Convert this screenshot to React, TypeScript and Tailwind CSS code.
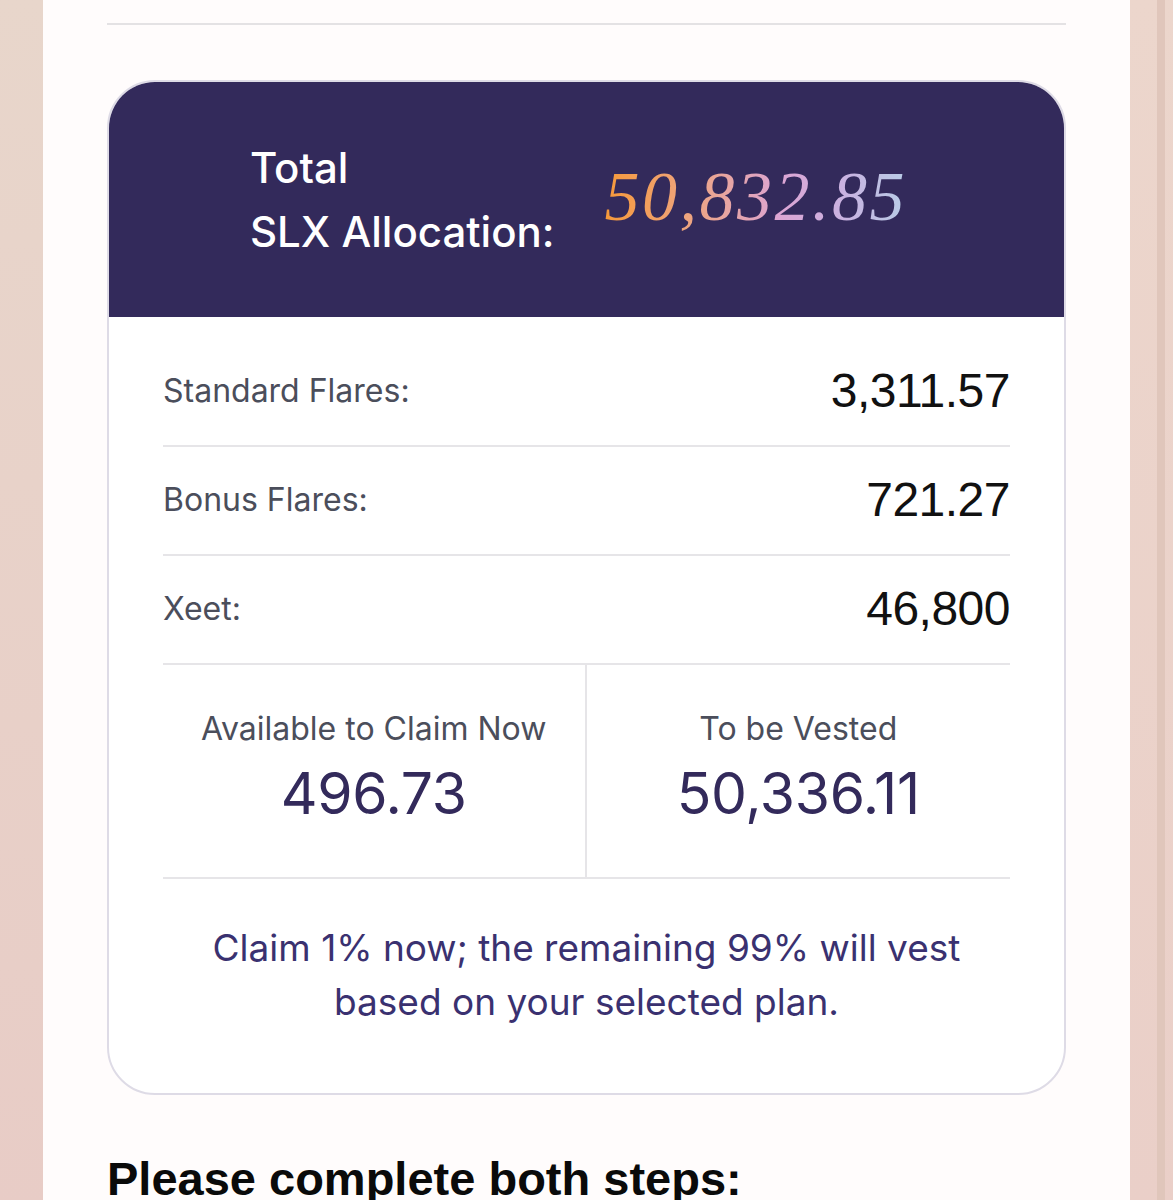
const rows = [
  { label: "Standard Flares:", value: "3,311.57" },
  { label: "Bonus Flares:", value: "721.27" },
  { label: "Xeet:", value: "46,800" },
];

function StatCell({ label, value, divider }: { label: string; value: string; divider?: boolean }) {
  return (
    <div
      className={`flex flex-col items-center justify-center pb-[8px] ${
        divider ? "border-r-2 border-[#e6e5e8]" : ""
      }`}
    >
      <span className="text-[32px] leading-[40px] text-[#4b4e5b]">{label}</span>
      <span className="mt-[13px] text-[57px] leading-[64px] tracking-[-0.3px] text-[#332a5b]">{value}</span>
    </div>
  );
}

export default function App() {
  return (
    <div className="flex min-h-[1200px] w-full overflow-hidden bg-[#fffcfc] font-['Inter',sans-serif]">
      <div className="w-[43px] shrink-0 bg-linear-to-b from-[#e8d6cb] to-[#e8ccc6]" />

      <main className="flex-1 px-[64px]">
        <div className="h-[23px]" />
        <div className="h-[2px] bg-[#e4e2e4]" />

        <section className="mt-[55px] overflow-hidden rounded-[48px] border-2 border-[#dedbe6] bg-white">
          <div className="flex h-[235px] items-center justify-center gap-[50px] bg-[#332a5b] pl-[0px] pr-[16px]">
            <h2 className="text-[42px] font-medium leading-[64px] text-white">
              Total
              <br />
              SLX Allocation:
            </h2>
            <span className="bg-[linear-gradient(90deg,#f6993a_0%,#eda585_30%,#dca5d4_58%,#c8b3e1_80%,#b8cce6_100%)] bg-clip-text pb-[6px] font-['Liberation_Serif',serif] text-[70px] italic leading-none tracking-[2.5px] text-transparent">
              50,832.85
            </span>
          </div>

          <div className="px-[54px] pt-[21px]">
            {rows.map((r) => (
              <div
                key={r.label}
                className="flex h-[109px] items-center justify-between border-b-2 border-[#e6e5e8] pb-[2px]"
              >
                <span className="text-[32px] text-[#4b4e5b]">{r.label}</span>
                <span className="font-['Liberation_Sans',sans-serif] text-[48px] tracking-[-0.5px] text-[#111111]">
                  {r.value}
                </span>
              </div>
            ))}

            <div className="grid h-[214px] grid-cols-2 border-b-2 border-[#e6e5e8]">
              <StatCell label="Available to Claim Now" value="496.73" divider />
              <StatCell label="To be Vested" value="50,336.11" />
            </div>

            <p className="pb-[64px] pt-[42px] text-center text-[37px] leading-[54px] text-[#3a3170]">
              Claim 1% now; the remaining 99% will vest
              <br />
              based on your selected plan.
            </p>
          </div>
        </section>

        <h3 className="mt-[56px] font-['Liberation_Sans',sans-serif] text-[47px] font-bold leading-[56px] text-[#0a0a0a]">
          Please complete both steps:
        </h3>
      </main>

      <div className="flex w-[43px] shrink-0 bg-linear-to-b from-[#ecd6cc] to-[#eacfc8]">
        <div className="w-[27px]" />
        <div className="w-[8px] bg-[#e0c6bb]" />
      </div>
    </div>
  );
}
